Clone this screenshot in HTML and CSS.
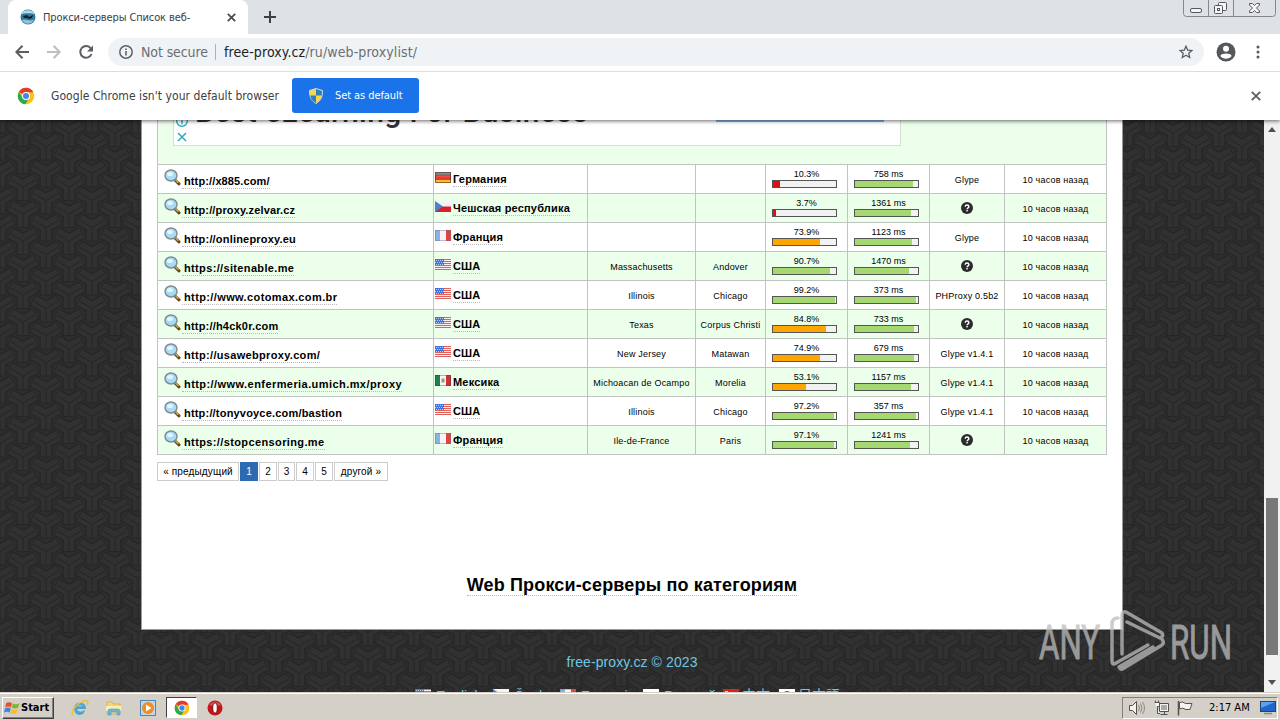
FILE: index.html
```html
<!DOCTYPE html>
<html lang="ru">
<head>
  <meta charset="UTF-8">
  <title>Прокси-серверы Список веб-</title>
  <link rel="stylesheet" href="styles.css">
</head>
<body>

<!-- Shared icons -->
<svg class="defs" width="0" height="0">
  <defs>
    <linearGradient id="gloss" x1="0" y1="0" x2="0" y2="1">
      <stop offset="0" stop-color="#fff" stop-opacity=".45"/>
      <stop offset="1" stop-color="#fff" stop-opacity="0"/>
    </linearGradient>
    <pattern id="weave" width="46" height="27" patternUnits="userSpaceOnUse">
      <rect width="46" height="27" fill="#2d2d2d"/>
      <g id="star" fill="none">
        <path d="M23 12V27M23 12L10 4.500M23 12L36 4.500" stroke="#252525" stroke-width="13"/>
        <path d="M23 12V26M23 12L10.500 5M23 12L35.500 5" stroke="#313131" stroke-width="10.500"/>
        <path d="M23 13V27M11 6L23 13L35 6" stroke="#272727" stroke-width="1.300"/>
      </g>
      <use href="#star" x="-23" y="-13.500"/>
      <use href="#star" x="23" y="-13.500"/>
      <use href="#star" x="-23" y="13.500"/>
      <use href="#star" x="23" y="13.500"/>
    </pattern>
    <symbol id="chrome" viewBox="0 0 48 48">
      <circle cx="24" cy="24" r="22" fill="#fbc116"/>
      <path d="M24 24L5 13A22 22 0 0 1 43.500 14H24Z" fill="#e33b2e"/>
      <path d="M5 13A22 22 0 0 0 22 46L32 29L24 24L15 29Z" fill="#2da94f"/>
      <circle cx="24" cy="24" r="10.500" fill="#fff"/>
      <circle cx="24" cy="24" r="8" fill="#4384f3"/>
    </symbol>
    <symbol id="lens" viewBox="0 0 17 17">
      <path d="M10.500 10.500L15 14.800" stroke="#5b4a22" stroke-width="3" stroke-linecap="round"/>
      <path d="M11.500 11L14.500 13.800" stroke="#d9a840" stroke-width="1.500"/>
      <ellipse cx="7" cy="6.500" rx="6" ry="5.500" fill="#a8dcf4" stroke="#7f8a90" stroke-width="1.400"/>
      <ellipse cx="6" cy="5" rx="3" ry="2" fill="#e2f6ff"/>
    </symbol>
    <symbol id="unknown" viewBox="0 0 12 12">
      <circle cx="6" cy="6" r="6" fill="#2b2b2b"/>
      <path d="M4.200 4.700C4.200 2.500 7.900 2.500 7.900 4.700C7.900 5.900 6.100 5.900 6.100 7.200" fill="none" stroke="#fff" stroke-width="1.400"/>
      <rect x="5.300" y="8" width="1.500" height="1.400" fill="#fff"/>
    </symbol>
    <symbol id="de" viewBox="0 0 16 11">
      <rect width="16" height="4" fill="#4b4b4b"/><rect y="4" width="16" height="4" fill="#e4392b"/><rect y="8" width="16" height="3" fill="#f4bd35"/>
      <rect width="16" height="6" fill="url(#gloss)"/><rect x=".5" y=".5" width="15" height="10" fill="none" stroke="#5a2a1c" stroke-opacity=".6"/>
    </symbol>
    <symbol id="cz" viewBox="0 0 16 11">
      <rect width="16" height="5.500" fill="#f5f5f5"/><rect y="5.500" width="16" height="5.500" fill="#dc2027"/>
      <path d="M0 0L8 5.500L0 11Z" fill="#4a82d0"/>
    </symbol>
    <symbol id="fr" viewBox="0 0 16 11">
      <rect width="16" height="11" fill="#f6f4f8"/><rect width="5" height="11" fill="#8fb1e2"/><rect x="11" width="5" height="11" fill="#e0453c"/>
      <rect x=".5" y=".5" width="15" height="10" fill="none" stroke="#6a6a90" stroke-opacity=".4"/>
    </symbol>
    <symbol id="us" viewBox="0 0 16 11">
      <rect width="16" height="11" fill="#fbeeee"/>
      <path d="M0 .5H16M0 2.500H16M0 4.500H16M0 6.500H16M0 8.500H16M0 10.500H16" stroke="#e0605c"/>
      <rect width="9" height="6" fill="#3e74dc"/>
      <path d="M1 1.500H9M0 3.500H9M1 5.500H9" stroke="#b5ccf5" stroke-dasharray="1 1"/>
    </symbol>
    <symbol id="mx" viewBox="0 0 16 11">
      <rect width="16" height="11" fill="#f6f6f3"/><rect width="5" height="11" fill="#20804a"/><rect x="11" width="5" height="11" fill="#cf3036"/>
      <rect x="6.500" y="3.500" width="3" height="4" fill="#9c9484"/>
      <rect x=".5" y=".5" width="15" height="10" fill="none" stroke="#333" stroke-opacity=".35"/>
    </symbol>
    <symbol id="ru" viewBox="0 0 16 11"><rect width="16" height="4" fill="#fff"/><rect y="4" width="16" height="4" fill="#3563b8"/><rect y="8" width="16" height="3" fill="#d62a2a"/></symbol>
    <symbol id="cn" viewBox="0 0 16 11"><rect width="16" height="11" fill="#d8241c"/><path d="M2 2H5V4H2Z" fill="#f8d648"/></symbol>
    <symbol id="jp" viewBox="0 0 16 11"><rect width="16" height="11" fill="#fff"/><circle cx="8" cy="5.500" r="3.500" fill="#d8342c"/></symbol>
  </defs>
</svg>

<header class="browser">
  <div class="tabstrip">
    <div class="tab">
      <svg width="16" height="16" viewBox="0 0 16 16"><circle cx="8" cy="8" r="7.500" fill="#327a9c"/><path d="M1 5C4 0 12 0 15 5C12 4 4 4 1 5Z" fill="#b9d7e4"/><path d="M3 7L7 6L9 8L13 6L12 9L9 10L7 9L4 9Z" fill="#10202e"/><path d="M2 11C6 10 10 13 14 10.500C12 16 4 16 2 11Z" fill="#8cc4da"/></svg>
      <span class="tab-title">Прокси-серверы Список веб-</span>
      <svg class="tab-close" width="9" height="9" viewBox="0 0 9 9"><path d="M.8.8L8.200 8.200M8.200.8L.8 8.200" stroke="#45494d" stroke-width="1.700"/></svg>
    </div>
    <svg class="tab-new" width="12" height="12" viewBox="0 0 12 12"><path d="M6 0V12M0 6H12" stroke="#3c4043" stroke-width="2"/></svg>
    <svg class="window-buttons" width="93" height="17" viewBox="0 0 93 17">
      <path d="M.5 0V13.500Q.5 16.500 3.500 16.500H89.500Q92.500 16.500 92.500 13.500V0M25.500 0V16M50.500 0V16" fill="none" stroke="#85888d"/>
      <g fill="#f4f5f7" stroke="#55585c">
        <rect x="7.500" y="8.500" width="11" height="4" rx="1.500"/>
        <rect x="35.500" y="2.500" width="8" height="8" rx="1"/><rect x="31.500" y="5.500" width="8" height="8" rx="1"/><rect x="34.500" y="8.500" width="2" height="2"/>
        <path d="M66.500 3.500H69.500L71.500 5.500L73.500 3.500H76.500V5L73.500 8L76.500 11V12.500H73.500L71.500 10.500L69.500 12.500H66.500V11L69.500 8L66.500 5Z"/>
      </g>
    </svg>
  </div>

  <div class="toolbar">
    <svg width="88" height="16" viewBox="0 0 88 16" fill="none" stroke-width="2">
      <path d="M14 8H1.500M7.500 1.700L1.300 8L7.500 14.300" stroke="#5a5e62"/>
      <path d="M32 8H44.500M38.500 1.700L44.700 8L38.500 14.300" stroke="#bdbfc1"/>
      <path d="M75.800 4.500A5.800 5.800 0 1 0 76.500 10" stroke="#5a5e62"/><path d="M78 1.500V7.500H72Z" fill="#5a5e62"/>
    </svg>
    <div class="omnibox">
      <svg width="14" height="14" viewBox="0 0 14 14"><circle cx="7" cy="7" r="6.200" fill="none" stroke="#5f6368" stroke-width="1.500"/><path d="M7 6V10.500M7 3.400V5" stroke="#5f6368" stroke-width="1.600"/></svg>
      <span class="not-secure">Not secure</span>
      <span class="omnibox-sep"></span>
      <span class="url"><b>free-proxy.cz</b>/ru/web-proxylist/</span>
      <svg class="bookmark" width="14" height="14" viewBox="0 0 14 14"><path d="M7 1.200L8.700 5.100L13 5.500L9.800 8.300L10.700 12.500L7 10.300L3.300 12.500L4.200 8.300L1 5.500L5.300 5.100Z" fill="none" stroke="#5a5e62" stroke-width="1.300"/></svg>
    </div>
    <svg class="profile" width="20" height="20" viewBox="0 0 20 20"><circle cx="10" cy="10" r="9.500" fill="#54585c"/><circle cx="10" cy="6.800" r="3" fill="#fff"/><path d="M4.300 14C5.500 10.800 14.500 10.800 15.700 14C13 17.500 7 17.500 4.300 14Z" fill="#fff"/></svg>
    <svg class="menu" width="4" height="14" viewBox="0 0 4 14" fill="#54585c"><circle cx="2" cy="2" r="1.500"/><circle cx="2" cy="7" r="1.500"/><circle cx="2" cy="12" r="1.500"/></svg>
  </div>

  <div class="infobar">
    <svg width="18" height="18"><use href="#chrome"/></svg>
    <span class="infobar-text">Google Chrome isn't your default browser</span>
    <button class="default-button">
      <svg width="14" height="16" viewBox="0 0 14 16"><path d="M7 .5L13.500 2.500C13.500 9 12 12.500 7 15.500C2 12.500.5 9 .5 2.500Z" fill="#f7d74a" stroke="#c7d7e4"/><path d="M7 7.500V15C3.500 13 2 11.500 1.300 7.500ZM7 1L12.900 2.900L12.700 7.500H7Z" fill="#2e7cc4"/></svg>
      <span>Set as default</span>
    </button>
    <svg class="infobar-close" width="10" height="10" viewBox="0 0 10 10"><path d="M.8.8L9.200 9.200M9.200.8L.8 9.200" stroke="#5a5e62" stroke-width="1.800"/></svg>
  </div>
</header>

<div class="viewport">
  <div class="page">
    <svg class="backdrop" width="1264" height="572"><rect width="1264" height="572" fill="url(#weave)"/></svg>
    <main class="content">
      <table class="proxies">
        <colgroup>
          <col class="c-url"><col class="c-country"><col class="c-region"><col class="c-city">
          <col class="c-bar"><col class="c-bar"><col class="c-type"><col class="c-time">
        </colgroup>
        <tbody id="proxyList">
          <tr>
            <td class="ad-cell" colspan="8">
              <div class="ad">
                <div class="ad-icons">
                  <svg width="12" height="12" viewBox="0 0 12 12" fill="none" stroke="#25a5bd" stroke-width="1.300"><circle cx="6" cy="6" r="5.300"/><path d="M6 5V9.500M6 2.500V4"/></svg>
                  <svg width="10" height="10" viewBox="0 0 10 10"><path d="M1 1L9 9M9 1L1 9" stroke="#25a5bd" stroke-width="1.400"/></svg>
                </div>
                <span class="ad-title">Best eLearning For Business</span>
                <span class="ad-button"></span>
              </div>
            </td>
          </tr>
        </tbody>
      </table>

      <div class="paginator">
        <a class="prev">« предыдущий</a><a class="current">1</a><a>2</a><a class="narrow">3</a><a>4</a><a>5</a><a class="next">другой »</a>
      </div>

      <h2><a>Web Прокси-серверы по категориям</a></h2>
    </main>

    <footer>
      <div class="copyright">free-proxy.cz © 2023</div>
      <div class="languages">
        <a class="en"><svg width="16" height="11"><use href="#us"/></svg>English</a>
        <a class="cs"><svg width="16" height="11"><use href="#cz"/></svg>Česky</a>
        <a class="fra"><svg width="16" height="11"><use href="#fr"/></svg>Français</a>
        <a class="rus"><svg width="16" height="11"><use href="#ru"/></svg>Русский</a>
        <a class="zh"><svg width="16" height="11"><use href="#cn"/></svg>中文</a>
        <a class="ja"><svg width="16" height="11"><use href="#jp"/></svg>日本語</a>
      </div>
    </footer>
  </div>

  <div class="scrollbar">
    <svg width="8" height="5" viewBox="0 0 8 5"><path d="M0 5L4 0L8 5Z" fill="#505050"/></svg>
    <div class="thumb"></div>
    <svg width="8" height="5" viewBox="0 0 8 5"><path d="M0 0L4 5L8 0Z" fill="#505050"/></svg>
  </div>
</div>

<!-- Watermark over the page -->
<svg class="watermark" width="200" height="66" viewBox="0 0 200 66">
  <text x="4" y="49.500" textLength="61" lengthAdjust="spacingAndGlyphs">ANY</text>
  <text x="135" y="49.500" textLength="62" lengthAdjust="spacingAndGlyphs">RUN</text>
  <g fill="none" stroke="#bdbdbd" stroke-width="3.500" stroke-linejoin="round" stroke-linecap="round">
    <path d="M87 45V6Q87 2 91 3L127 24Q129 27 125 29L92 13"/>
    <path d="M83 9Q77 9 77 15V52Q77 57 81 54L113 36"/>
    <path d="M126 29Q130 33 127 36L89 59Q86 62 84 58L118 38"/>
  </g>
</svg>

<div class="taskbar">
  <div class="start">
    <svg width="16" height="16" viewBox="0 0 15 15"><path d="M2 3Q5 1 7.500 3L6.500 7Q4 5 1 7Z" fill="#e8502a"/><path d="M8.300 3.300Q11 5 14.500 3L13.300 7Q10 9 7.300 7.300Z" fill="#7cb82f"/><path d="M.8 8Q4 6 6.300 8L5.300 12Q3 10 0 12Z" fill="#3f86d8"/><path d="M7.100 8.400Q10 10 13 8L12 12Q9 14 6.100 12.400Z" fill="#f7be2a"/></svg>
    <b>Start</b>
  </div>
  <div class="quick">
    <svg width="18" height="18" viewBox="0 0 18 18"><path d="M14.500 9.500H5.500Q6 13 9.500 13Q12 13 13.500 11.500Q12.500 15.500 9 15.500Q3.500 15.500 3.500 9.500Q3.500 4 9 4Q14.500 4 14.500 9.500ZM5.800 7.800H12Q11.500 5.800 9 5.800Q6.500 5.800 5.800 7.800" fill="#42b0e6" stroke="#2582b6" stroke-width=".5"/><path d="M2 16Q-1 12 6 6Q14 0 16.500 2Q17.500 3 16 5.500" fill="none" stroke="#efbf38" stroke-width="1.500"/></svg>
    <svg width="18" height="18" viewBox="0 0 18 18"><path d="M2 3H7L8 5H15V15H2Z" fill="#f0d780" stroke="#c7a84e" stroke-width=".7"/><path d="M1 7H16V12H1Z" fill="#fbeeb4"/><path d="M3 16V12Q3 10 5 10H13Q15 10 15 12V16H12V13H6V16Z" fill="#6eb7d9" stroke="#458fb4" stroke-width=".5"/></svg>
    <svg width="18" height="18" viewBox="0 0 18 18"><rect x="1.500" y="1.500" width="15" height="15" fill="#bdd8ee" stroke="#4f87b8"/><circle cx="9" cy="9" r="6" fill="#f18c20"/><path d="M7 5.500L12.500 9L7 12.500Z" fill="#fff"/></svg>
    <span class="active-app"><svg width="16" height="16"><use href="#chrome"/></svg></span>
    <svg width="16" height="16" viewBox="0 0 16 16"><circle cx="8" cy="8" r="7.500" fill="#c4151b"/><path d="M2 5Q8-2 14 5Q8 7 2 5Z" fill="#e87878" opacity=".6"/><ellipse cx="8" cy="8" rx="2.300" ry="5.200" fill="#fff" stroke="#7d0b0e"/></svg>
  </div>
  <div class="tray">
    <svg width="64" height="16" viewBox="0 0 64 16" fill="#f4f2ee" stroke="#55524d">
      <path d="M.5 5.500H3.500L7.500 1.500V14.500L3.500 10.500H.5Z"/><path d="M9.500 5Q11.500 8 9.500 11M11.500 3.500Q14.500 8 11.500 12.500M13.500 2Q17.500 8 13.500 14" fill="none" stroke="#8d8a85"/>
      <path d="M30.500 3.500H39.500V11.500H30.500ZM31.500 14.500H38.500M35.500 11.500V14"/><path d="M25.500 2.500H30.500V6.500H28.500V13.500H31" /><path d="M26.500 .5V2.500M29.500 .5V2.500"/><rect x="32" y="5" width="6" height="5" fill="#aaa" stroke="none"/>
      <path d="M49.500 1V15.500" stroke-width="1.500"/><path d="M50.500 2.500Q53.500 1 56.500 3.500H63L61 9.500H57Q53.500 7 50.500 9Z"/>
    </svg>
    <span class="clock">2:17 AM</span>
    <svg width="16" height="15" viewBox="0 0 16 15"><rect x=".5" y="1.500" width="15" height="10" fill="#1f67c8" stroke="#25456f"/><path d="M1 2H15L1 8Z" fill="#58a4ee"/><path d="M4 13.500H12" stroke="#888" stroke-width="1.500"/></svg>
  </div>
</div>

<script>
  // url, letter spacing, flag, country, region, city, uptime, uptime colour, speed, speed bar, type
  const proxies = [
    ['http://x885.com/', 0.12, 'de', 'Германия', '', '', 10.3, 'red', 758, 92, 'Glype'],
    ['http://proxy.zelvar.cz', 0.14, 'cz', 'Чешская республика', '', '', 3.7, 'red', 1361, 88.5, ''],
    ['http://onlineproxy.eu', 0.19, 'fr', 'Франция', '', '', 73.9, 'orange', 1123, 90.5, 'Glype'],
    ['https://sitenable.me', 0.35, 'us', 'США', 'Massachusetts', 'Andover', 90.7, 'green', 1470, 86.5, ''],
    ['http://www.cotomax.com.br', 0.38, 'us', 'США', 'Illinois', 'Chicago', 99.2, 'green', 373, 96.5, 'PHProxy 0.5b2'],
    ['http://h4ck0r.com', 0.2, 'us', 'США', 'Texas', 'Corpus Christi', 84.8, 'orange', 733, 93.5, ''],
    ['http://usawebproxy.com/', 0.32, 'us', 'США', 'New Jersey', 'Matawan', 74.9, 'orange', 679, 94, 'Glype v1.4.1'],
    ['http://www.enfermeria.umich.mx/proxy', 0.43, 'mx', 'Мексика', 'Michoacan de Ocampo', 'Morelia', 53.1, 'orange', 1157, 89.5, 'Glype v1.4.1'],
    ['http://tonyvoyce.com/bastion', 0.19, 'us', 'США', 'Illinois', 'Chicago', 97.2, 'green', 357, 96.5, 'Glype v1.4.1'],
    ['https://stopcensoring.me', 0.38, 'fr', 'Франция', 'Ile-de-France', 'Paris', 97.1, 'green', 1241, 88, '']
  ];

  function bar(label, width, color) {
    return `<td class="bar-cell"><small>${label}</small><div class="bar"><div class="${color}" style="width: ${width}%"></div></div></td>`;
  }

  document.getElementById('proxyList').insertAdjacentHTML('beforeend', proxies.map(p => `
    <tr>
      <td><div class="site"><svg width="17" height="17"><use href="#lens"/></svg><a style="letter-spacing: ${p[1]}px">${p[0]}</a></div></td>
      <td><div class="country"><svg width="16" height="11"><use href="#${p[2]}"/></svg><a>${p[3]}</a></div></td>
      <td class="small">${p[4]}</td>
      <td class="small">${p[5]}</td>
      ${bar(p[6] + '%', p[6] < 15 ? p[6] + 1.5 : p[6], p[7])}
      ${bar(p[8] + ' ms', p[9], 'green')}
      <td class="small">${p[10] || '<svg class="unknown" width="12" height="12"><use href="#unknown"/></svg>'}</td>
      <td class="small">10 часов назад</td>
    </tr>`).join(''));
</script>

</body>
</html>
```

FILE: styles.css
```css
* {
  box-sizing: border-box;
}
body {
  margin: 0;
  width: 1280px;
  height: 720px;
  overflow: hidden;
  display: flex;
  flex-direction: column;
  font-family: "Liberation Sans", Arial, sans-serif;
  color: #000;
}
svg {
  display: block;
  flex: none;
}
.defs {
  position: absolute;
}

/* Browser chrome */
.browser {
  position: relative;
  z-index: 2;
  height: 120px;
  background: #fff;
  box-shadow: 0 1px 4px rgba(0, 0, 0, 0.6);
  font-family: "DejaVu Sans Condensed", "DejaVu Sans", sans-serif;
  white-space: nowrap;
}
.tabstrip {
  display: flex;
  height: 34px;
  background: #dee1e6;
}
.tab {
  display: flex;
  align-items: center;
  width: 240px;
  margin-left: 8px;
  padding: 0 12px;
  background: #fff;
  border-radius: 8px 8px 0 0;
}
.tab-title {
  margin-left: 7px;
  font-size: 11px;
  letter-spacing: -0.12px;
  color: #3c4043;
}
.tab-close {
  margin-left: auto;
}
.tab-new {
  margin: 11px 0 0 16px;
}
.window-buttons {
  margin: 0 4px 0 auto;
}
.toolbar {
  display: flex;
  align-items: center;
  height: 38px;
  padding: 0 20px 2px 15px;
  border-bottom: 1px solid #dcdee0;
}
.omnibox {
  display: flex;
  align-items: center;
  width: 1096px;
  height: 28px;
  margin-left: 5px;
  padding: 0 11px;
  border-radius: 14px;
  background: #f0f3f5;
  font-size: 14px;
  color: #6a6e72;
}
.not-secure {
  width: 68px;
  margin-left: 8px;
  letter-spacing: -0.1px;
}
.omnibox-sep {
  width: 1px;
  height: 16px;
  margin: 0 8px 0 6px;
  background: #aeb1b5;
}
.url {
  letter-spacing: 0.1px;
}
.url b {
  font-weight: normal;
  color: #202124;
}
.bookmark {
  margin-left: auto;
}
.profile {
  margin-left: 12px;
}
.menu {
  margin-left: auto;
}
.infobar {
  display: flex;
  align-items: center;
  height: 48px;
  padding: 0 19px 1px 17px;
}
.infobar-text {
  width: 229px;
  margin-left: 16px;
  font-size: 12px;
  letter-spacing: 0.06px;
  color: #3c4043;
}
.default-button {
  display: flex;
  align-items: center;
  width: 127px;
  height: 35px;
  margin-left: 12px;
  padding: 0 0 0 17px;
  border: 0;
  border-radius: 3px;
  background: #1a73e8;
  color: #fff;
  font-family: inherit;
  font-size: 11px;
}
.default-button span {
  margin-left: 12px;
  letter-spacing: -0.08px;
}
.infobar-close {
  margin-left: auto;
}

/* Page */
.viewport {
  display: flex;
  height: 572px;
  overflow: hidden;
}
.page {
  position: relative;
  width: 1264px;
  height: 572px;
  overflow: hidden;
}
.backdrop {
  position: absolute;
  top: 0;
  left: 0;
}
.content {
  position: relative;
  width: 982px;
  height: 510px;
  margin-left: 141px;
  padding: 0 15px;
  background: #fff;
  border: 1px solid #999;
  border-top: 0;
}
.proxies {
  width: 950px;
  table-layout: fixed;
  border-collapse: separate;
  border-spacing: 0;
  border-left: 1px solid #c0c4c0;
}
.c-url { width: 276px; }
.c-country { width: 154px; }
.c-region { width: 108px; }
.c-city { width: 70px; }
.c-bar { width: 82px; }
.c-type { width: 75px; }
.c-time { width: 102px; }
.proxies td {
  height: 29px;
  padding: 0;
  border-right: 1px solid #c0c4c0;
  border-bottom: 1px solid #c0c4c0;
}
.proxies tr:nth-child(odd) {
  background: #ebffeb;
}
.proxies .ad-cell {
  height: 45px;
  padding: 0 0 18px 15px;
  vertical-align: top;
}
.ad {
  display: flex;
  width: 728px;
  height: 26px;
  overflow: hidden;
  background: #fff;
  border: 1px solid #d5dfd5;
  border-top: 0;
}
.ad-icons {
  width: 21px;
  padding-left: 2px;
  margin-top: -5px;
}
.ad-icons svg + svg {
  margin: 5px 0 0 1px;
}
.ad-title {
  width: 396px;
  margin-top: -28px;
  font-family: Roboto, sans-serif;
  font-size: 30px;
  font-weight: 500;
  line-height: 40px;
  letter-spacing: 0.4px;
  white-space: nowrap;
  color: #333;
}
.ad-button {
  width: 168px;
  height: 2px;
  margin-left: 125px;
  background: #7fb4ec;
}
.site,
.country {
  display: flex;
  height: 28px;
  font-size: 11px;
  font-weight: bold;
  white-space: nowrap;
}
.site {
  padding: 4px 0 0 6px;
}
.site a {
  height: 15px;
  margin: 5px 0 0 1px;
  padding-left: 2px;
  line-height: 15px;
  border-bottom: 1px dotted #bbb;
}
.country {
  padding: 7px 0 0 1px;
}
.country a {
  height: 15px;
  margin-left: 2px;
  line-height: 15px;
  letter-spacing: 0.18px;
  border-bottom: 1px dotted #bbb;
}
.small {
  font-size: 9px;
  text-align: center;
  white-space: nowrap;
}
.proxies .small {
  padding-top: 2px;
  letter-spacing: 0.2px;
}
.unknown {
  margin: -2px auto 0;
}
.proxies .bar-cell {
  padding: 4px 10px 0 6px;
  vertical-align: top;
}
.bar-cell small {
  display: block;
  margin-right: -4px;
  font-size: 9px;
  line-height: 11px;
  text-align: center;
}
.bar {
  width: 65px;
  height: 8px;
  border: 1px solid #555;
  background: #f2f2f2;
}
.bar div {
  height: 6px;
}
.red { background: #e01010; }
.orange { background: #ffa500; }
.green { background: #a5d870; }

.paginator {
  display: flex;
  gap: 1px;
  margin-top: 7px;
  font-size: 10px;
  line-height: 17px;
  letter-spacing: 0.15px;
  text-align: center;
  white-space: nowrap;
}
.paginator a {
  width: 18px;
  height: 19px;
  border: 1px solid #ccc;
}
.paginator .narrow { width: 17px; }
.paginator .prev { width: 82px; }
.paginator .next { width: 54px; }
.paginator .current {
  background: #2e6ab1;
  border-color: #2e6ab1;
  color: #fff;
}
h2 {
  margin: 94px 0 0;
  font-size: 18px;
  line-height: 20px;
  letter-spacing: 0.16px;
  text-align: center;
}
h2 a {
  display: inline-block;
  border-bottom: 1px dotted #bbb;
}
footer {
  position: relative;
  color: #6fc6e4;
  font-size: 14px;
}
.copyright {
  height: 59px;
  padding-top: 24px;
  line-height: 17px;
  letter-spacing: 0.1px;
  text-align: center;
}
.languages {
  display: flex;
  padding-left: 415px;
  line-height: 15px;
  white-space: nowrap;
  font-family: "Liberation Sans", "Noto Sans CJK JP", sans-serif;
}
.languages a {
  display: flex;
  gap: 5px;
}
.languages .en { width: 78px; }
.languages .cs { width: 67px; }
.languages .fra { width: 83px; }
.languages .rus { width: 80px; }
.languages .zh { width: 56px; }
.languages .zh,
.languages .ja {
  gap: 3px;
  line-height: 12px;
}

.scrollbar {
  display: flex;
  flex-direction: column;
  align-items: center;
  width: 16px;
  padding: 7px 0;
  background: #f1f1f1;
}
.thumb {
  width: 12px;
  height: 157px;
  margin: 366px 0 auto;
  background: #787878;
}
.watermark {
  position: absolute;
  left: 1035px;
  top: 609px;
  z-index: 3;
  opacity: 0.75;
}
.watermark text {
  font-family: Roboto, sans-serif;
  font-size: 49px;
  fill: #bdbdbd;
  stroke: #bdbdbd;
  stroke-width: 1px;
}

/* Taskbar */
.taskbar {
  display: flex;
  align-items: center;
  height: 28px;
  padding: 2px 2px 0;
  background: #d4d0c8;
  border-top: 1px solid #d4d0c8;
  box-shadow: inset 0 1px 0 #fff;
  font-family: "DejaVu Sans Condensed", "DejaVu Sans", sans-serif;
  font-size: 11px;
  white-space: nowrap;
}
.start {
  display: flex;
  align-items: center;
  gap: 1px;
  width: 52px;
  height: 22px;
  padding-left: 1px;
  border: 1px solid;
  border-color: #fff #404040 #404040 #fff;
  box-shadow: inset -1px -1px 0 #808080;
}
.start b {
  font-size: 11px;
  letter-spacing: 0;
}
.quick {
  display: flex;
  align-items: center;
  gap: 16px;
  margin-left: 17px;
}
.active-app {
  display: flex;
  align-items: center;
  justify-content: center;
  width: 31px;
  height: 21px;
  margin: 0 -6px 0 -7px;
  background: #fff;
  border: 1px solid;
  border-color: #404040 #fff #fff #404040;
}
.tray {
  display: flex;
  align-items: center;
  width: 156px;
  height: 22px;
  margin-left: auto;
  padding-left: 6px;
  border: 1px solid;
  border-color: #808080 #fff #fff #808080;
}
.clock {
  width: 43px;
  margin: 0 8px 0 16px;
  letter-spacing: 0;
}
```
